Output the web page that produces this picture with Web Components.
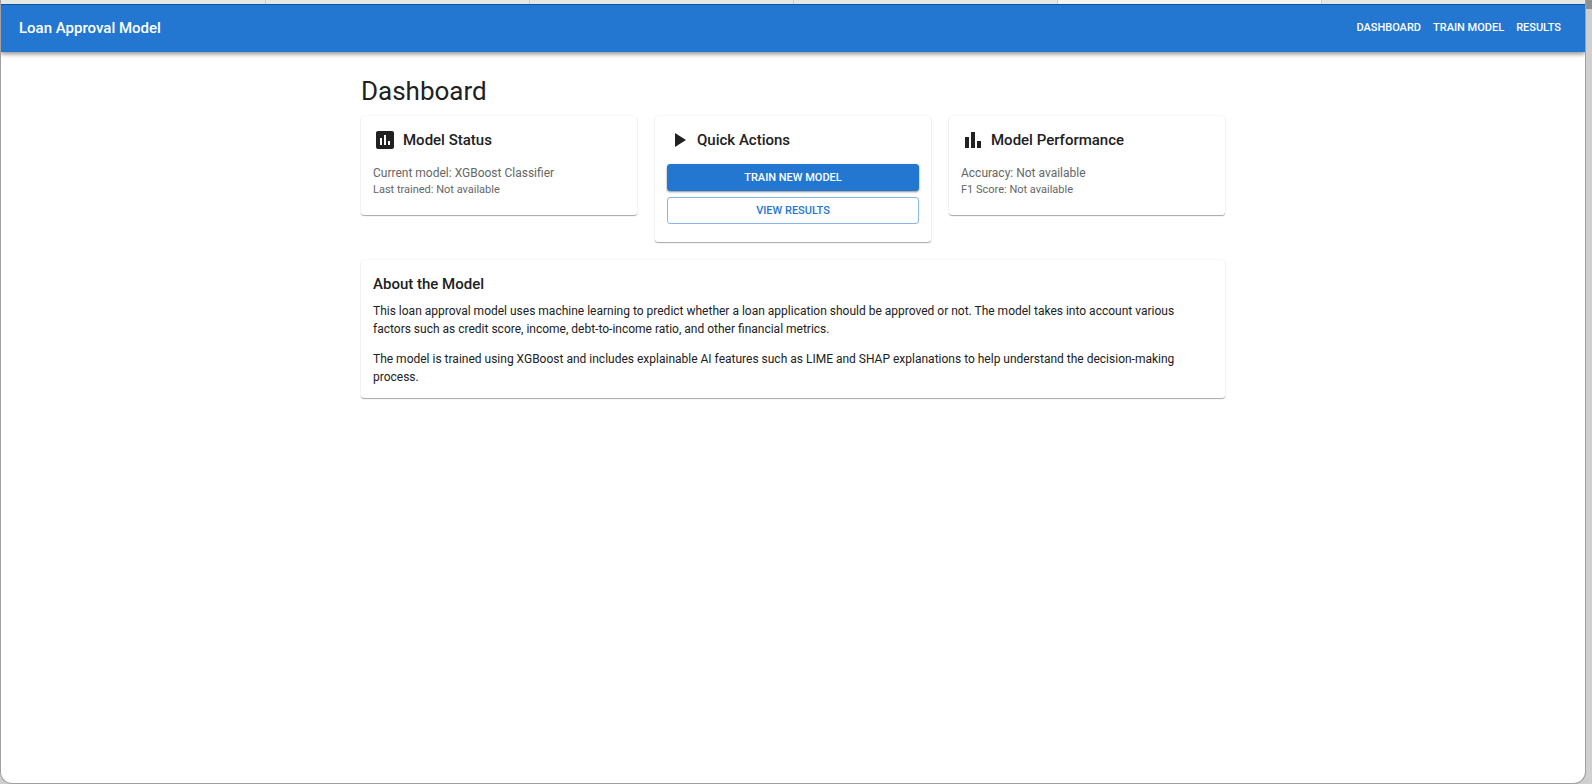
<!DOCTYPE html>
<html lang="en">
<head>
<meta charset="utf-8">
<meta name="viewport" content="width=device-width, initial-scale=1">
<title>Loan Approval Model</title>
<style>
  html { height: 100%; }
  body {
    margin: 0;
    min-height: 100%;
    display: flex;
    background: #cfcfcf;
    color: #212121;
    font-family: Roboto, "Liberation Sans", sans-serif;
    font-size: 12px;
    line-height: 18px;
  }
</style>
</head>
<body>
<browser-window>
  <app-bar slot="bar" heading="Loan Approval Model">
    <nav-link href="#dashboard">Dashboard</nav-link>
    <nav-link href="#train">Train Model</nav-link>
    <nav-link href="#results">Results</nav-link>
  </app-bar>
  <dashboard-page heading="Dashboard">
    <info-card slot="cards" heading="Model Status">
      <card-icon slot="icon" name="assessment"></card-icon>
      <stat-line>Current model: XGBoost Classifier</stat-line>
      <stat-line small>Last trained: Not available</stat-line>
    </info-card>
    <info-card slot="cards" heading="Quick Actions">
      <card-icon slot="icon" name="play"></card-icon>
      <action-button variant="contained">Train New Model</action-button>
      <action-button variant="outlined">View Results</action-button>
    </info-card>
    <info-card slot="cards" heading="Model Performance">
      <card-icon slot="icon" name="bars"></card-icon>
      <stat-line>Accuracy: Not available</stat-line>
      <stat-line small>F1 Score: Not available</stat-line>
    </info-card>
    <about-card heading="About the Model">
      <text-block>This loan approval model uses machine learning to predict whether a loan application should be approved or not. The model takes into account various factors such as credit score, income, debt-to-income ratio, and other financial metrics.</text-block>
      <text-block>The model is trained using XGBoost and includes explainable AI features such as LIME and SHAP explanations to help understand the decision-making process.</text-block>
    </about-card>
  </dashboard-page>
</browser-window>

<script>
const define = (name, render) => customElements.define(name, class extends HTMLElement {
  connectedCallback() {
    if (this.shadowRoot) return;
    this.attachShadow({ mode: "open" }).innerHTML = render(this);
  }
});

/* Window frame: the lower edge of the tab strip, then the page. */
define("browser-window", () => `
<style>
  :host { flex: 1; display: flex; background: linear-gradient(#8f908f 9px, #cfcfcf 9px); }
  .frame {
    flex: 1; min-width: 0; box-sizing: border-box; margin-right: 7px;
    display: flex; flex-direction: column;
    background: #fff; border: solid #a0a0a0; border-width: 0 0 1px 1px;
    border-radius: 0 0 12px 12px; box-shadow: 1px 0 #a0a0a0;
  }
  .tabs { display: grid; grid-template-columns: repeat(6, 1fr); height: 4px; background: #e6e6e4; }
  .tabs i { box-sizing: border-box; border-left: 1px solid #cdcdcb; }
  .tabs i:first-child { border: 0; }
  .tabs .active { background: #f3f4ef; }
</style>
<div class="frame">
  <div class="tabs"><i></i><i></i><i></i><i></i><i class="active"></i><i></i></div>
  <slot name="bar"></slot>
  <slot></slot>
</div>`);

define("app-bar", el => `
<style>
  :host { display: block; }
  header {
    display: flex; align-items: center; justify-content: space-between;
    height: 48px; box-sizing: border-box; padding: 0 18px 2px;
    border-top: 1px solid #0d52a3;
    background: #2377d0; color: #fff;
    box-shadow: 0 2px 3px rgba(0,0,0,.2), 0 3px 4px rgba(0,0,0,.14), 0 1px 8px rgba(0,0,0,.12);
    clip-path: inset(0 0 -12px 0);
  }
  .title { font-size: 15px; line-height: 24px; font-weight: 500; }
  nav { display: flex; }
</style>
<header><div class="title">${el.getAttribute("heading")}</div><nav><slot></slot></nav></header>`);

define("nav-link", el => `
<style>
  :host { display: block; }
  a {
    display: block; padding: 5px 6px; border-radius: 3px;
    color: inherit; text-decoration: none; text-transform: uppercase;
    font-size: 11px; line-height: 18px; font-weight: 500;
  }
</style>
<a href="${el.getAttribute("href")}"><slot></slot></a>`);

define("dashboard-page", el => `
<style>
  :host { display: block; }
  main { max-width: 864px; margin: 23px auto 0; padding: 0 18px; }
  h1 { margin: 0 0 9px; font-size: 26px; line-height: 32px; font-weight: 400; }
  .cards { display: grid; grid-template-columns: repeat(3, 1fr); gap: 18px; align-items: start; margin-bottom: 18px; }
</style>
<main>
  <h1>${el.getAttribute("heading")}</h1>
  <div class="cards"><slot name="cards"></slot></div>
  <slot></slot>
</main>`);

const surface = `
  background: #fff; border-radius: 3px;
  box-shadow: 0 1px 1px rgba(0,0,0,.22), 0 1px 1px rgba(0,0,0,.14), 0 0 2px rgba(0,0,0,.08);`;

define("info-card", el => `
<style>
  :host { display: block; }
  section { ${surface} padding: 12px 12px 18px; }
  header { display: flex; align-items: center; gap: 6px; margin-bottom: 12px; }
  h2 { margin: 0; font-size: 15px; line-height: 24px; font-weight: 500; }
  .body { display: flex; flex-direction: column; }
</style>
<section>
  <header><slot name="icon"></slot><h2>${el.getAttribute("heading")}</h2></header>
  <div class="body"><slot></slot></div>
</section>`);

define("about-card", el => `
<style>
  :host { display: block; }
  section { ${surface} padding: 12px; }
  h2 { margin: 0 0 6px; font-size: 15px; line-height: 24px; font-weight: 500; }
  .body { display: flex; flex-direction: column; gap: 12px; }
</style>
<section><h2>${el.getAttribute("heading")}</h2><div class="body"><slot></slot></div></section>`);

define("text-block", () => `
<style>:host { display: block; } p { margin: 0; }</style>
<p><slot></slot></p>`);

define("stat-line", () => `
<style>
  :host { display: block; color: #666; }
  :host([small]) { font-size: 11px; line-height: 15px; }
  p { margin: 0; }
</style>
<p><slot></slot></p>`);

define("action-button", () => `
<style>
  :host { display: block; }
  :host(:not(:last-child)) { margin-bottom: 6px; }
  button {
    display: block; width: 100%; height: 27px; box-sizing: border-box; padding: 0 12px;
    border: 1px solid #8ab5e5; border-radius: 3px; background: #fff; color: #2377d0;
    font: 500 11px/18px Roboto, "Liberation Sans", sans-serif; text-transform: uppercase; cursor: pointer;
  }
  :host([variant="contained"]) button {
    border-color: #2377d0; background: #2377d0; color: #fff;
    box-shadow: 0 1px 2px rgba(0,0,0,.35), 0 1px 3px rgba(0,0,0,.12);
  }
</style>
<button type="button"><slot></slot></button>`);

const icons = {
  assessment: "M19 3H5c-1.1 0-2 .9-2 2v14c0 1.1.9 2 2 2h14c1.1 0 2-.9 2-2V5c0-1.1-.9-2-2-2zM9 17H7v-7h2v7zm4 0h-2V7h2v10zm4 0h-2v-4h2v4z",
  play: "M8 5v14l11-7z",
  bars: "M4 9h4v11H4zm12 4h4v7h-4zm-6-9h4v16h-4z"
};
define("card-icon", el => `
<style>:host { display: block; } svg { display: block; width: 24px; height: 24px; fill: currentColor; }</style>
<svg viewBox="0 0 24 24" aria-hidden="true"><path d="${icons[el.getAttribute("name")]}"/></svg>`);
</script>
</body>
</html>
